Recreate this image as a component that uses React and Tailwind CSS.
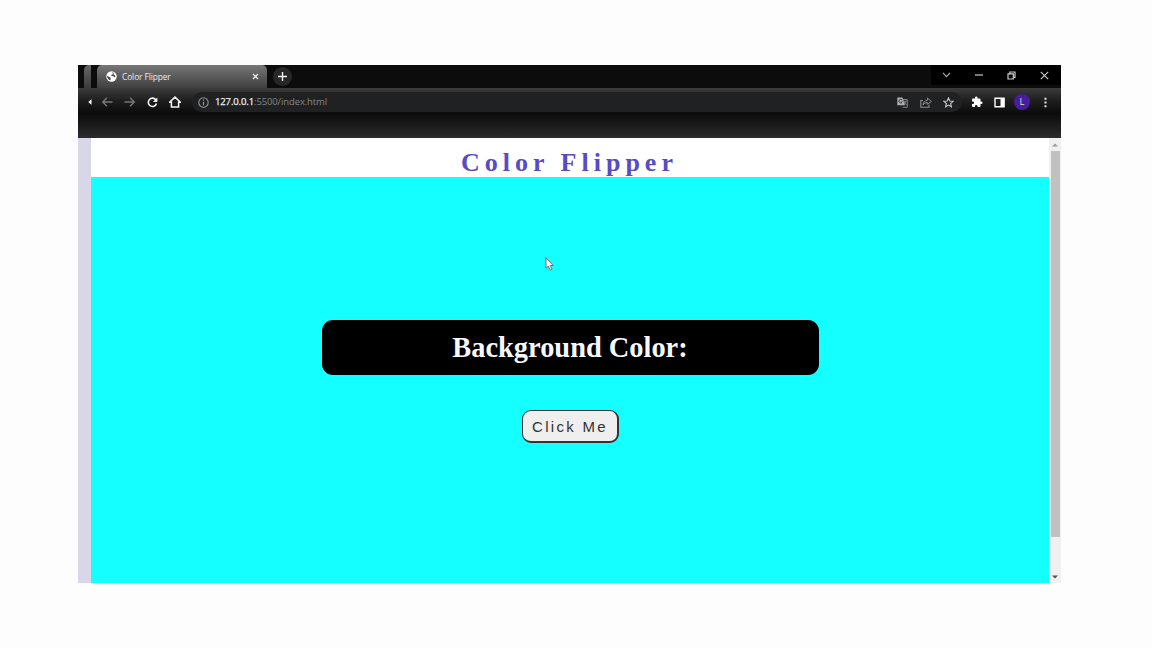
import React from "react";

const Cell = ({ className = "", children }) => (
  <span className={`flex h-full shrink-0 items-center justify-center ${className}`}>{children}</span>
);

function TabStrip() {
  return (
    <div className="flex h-[23px] shrink-0 bg-[#0c0c0c]">
      <div className="ml-[6px] h-full w-[7px] rounded-tl-[5px] bg-linear-to-b from-[#666] to-[#3c3c3c]" />
      <div className="ml-[6px] flex h-full w-[170px] items-center rounded-t-[5px] bg-linear-to-b from-[#777777] to-[#404040] pl-[8px]">
        <svg width="11" height="11" viewBox="0 0 11 11" className="ml-[1px] shrink-0">
          <circle cx="5.5" cy="5.5" r="5.2" fill="#fff" />
          <path d="M5.5 1.3 8.2 2 7 3.3 5.6 3.6 5.3 5 7.3 5 8.1 6.2 9.5 6 8.8 4.2M1 4.5 3.3 6.1 4.8 6.8 4.4 9.3 3 8.9 1.3 6.5Z" fill="#4a4a4a" />
        </svg>
        <span className="mt-[1px] ml-[5px] flex-1 font-['Open_Sans',sans-serif] text-[8.4px] leading-none tracking-[-0.1px] whitespace-nowrap text-[#eeeeee]">Color Flipper</span>
        <svg width="7" height="7" viewBox="0 0 7 7" className="mr-[8px] shrink-0">
          <path d="M1 1 6 6M6 1 1 6" stroke="#eee" strokeWidth="1.3" />
        </svg>
      </div>
      <div className="mt-[2px] ml-[6px] flex h-[19px] w-[19px] items-center justify-center rounded-full bg-[#272727]">
        <svg width="9" height="9" viewBox="0 0 9 9">
          <path d="M4.5 0V9M0 4.5H9" stroke="#f4f4f4" strokeWidth="1.4" />
        </svg>
      </div>
      <div className="ml-auto flex h-[20px] w-[130px] bg-black pl-[1px]">
        <Cell className="w-[29px]">
          <svg width="9" height="6" viewBox="0 0 9 6"><path d="M1 .8 4.5 4.7 8 .8" fill="none" stroke="#aaa" strokeWidth="1.2" /></svg>
        </Cell>
        <Cell className="w-[35px]">
          <svg width="8" height="2" viewBox="0 0 8 2"><path d="M0 1H8" stroke="#bbb" strokeWidth="1.3" /></svg>
        </Cell>
        <Cell className="w-[31px]">
          <svg width="9" height="9" viewBox="0 0 9 9"><path d="M1 2.8H6.3V8H1ZM2.8 2.6V1H8V6.5H6.4" fill="none" stroke="#ccc" strokeWidth="1.2" /></svg>
        </Cell>
        <Cell className="w-[34px]">
          <svg width="9" height="9" viewBox="0 0 9 9"><path d="M.8.8 8.2 8.2M8.2.8.8 8.2" stroke="#ccc" strokeWidth="1.1" /></svg>
        </Cell>
      </div>
    </div>
  );
}

function Toolbar() {
  return (
    <div className="flex h-[26px] shrink-0 items-center bg-linear-to-b from-[#3c3c3c] via-[#1e1e1e] to-[#0a0a0a] pt-[2px] pl-[6px]">
      <Cell className="w-[12px]">
        <svg width="4" height="6" viewBox="0 0 4 6"><path d="M3.5 .2V5.8L.3 3Z" fill="#fff" /></svg>
      </Cell>
      <Cell className="w-[22px]">
        <svg width="11" height="10" viewBox="0 0 11 10"><path d="M10.5 5H1M5 .8.8 5 5 9.2" fill="none" stroke="#777" strokeWidth="1.4" /></svg>
      </Cell>
      <Cell className="w-[23px]">
        <svg width="11" height="10" viewBox="0 0 11 10"><path d="M.5 5H10M6 .8 10.2 5 6 9.2" fill="none" stroke="#777" strokeWidth="1.4" /></svg>
      </Cell>
      <Cell className="w-[22px]">
        <svg width="11" height="11" viewBox="0 0 11 11"><path d="M9 3A4.2 4.2 0 1 0 9.5 6.6" fill="none" stroke="#f4f4f4" strokeWidth="1.6" /><path d="M10.4 .4V4.9H5.9Z" fill="#f4f4f4" /></svg>
      </Cell>
      <Cell className="w-[24px]">
        <svg width="12" height="12" viewBox="0 0 12 12"><path d="M.5 6.2 6 1.1 11.5 6.2H9.6V11H2.4V6.2Z" fill="none" stroke="#f4f4f4" strokeWidth="1.5" /></svg>
      </Cell>
      <div className="ml-[5px] flex h-[20px] w-[770px] shrink-0 items-center rounded-full bg-[#202123] pr-[2px]">
        <Cell className="w-[23px]">
          <svg width="11" height="11" viewBox="0 0 11 11"><circle cx="5.5" cy="5.5" r="4.7" fill="none" stroke="#929292" strokeWidth="1.1" /><path d="M5.5 4.8V8.2M5.5 2.6V3.8" stroke="#929292" strokeWidth="1.2" /></svg>
        </Cell>
        <span className="flex-1 font-['Open_Sans',sans-serif] text-[9.5px] leading-none tracking-[-0.12px] whitespace-nowrap text-[#858585]">
          <span className="text-[#eeeeee] [-webkit-text-stroke:0.25px_#eeeeee]">127.0.0.1</span>:5500/index.html
        </span>
        <Cell className="w-[23px]">
          <svg width="11" height="11" viewBox="0 0 11 11"><path d="M5.5 2.5H10.3V10.3H5.5" fill="none" stroke="#858585" /><path d="M.3.5H5.5L8 8.2H.3Z" fill="#b0b0b0" /><path d="M5.2 3.2A1.8 1.8 0 1 0 5.3 5H3.8" fill="none" stroke="#333" strokeWidth=".9" /><path d="M6.8 4.3H9.8M8.6 4.3 7.5 6.5M7.3 5.2 9.5 8" stroke="#999" strokeWidth=".8" /></svg>
        </Cell>
        <Cell className="w-[23px]">
          <svg width="12" height="11" viewBox="0 0 12 11"><path d="M3 3.5H.8V10.3H9V7.8" fill="none" stroke="#8f8f8f" strokeWidth="1.1" /><path d="M3 8C3.3 5 5 3.5 7.4 3.3V1L11.3 4.5 7.4 7.4V5.5C5.4 5.6 4 6.5 3 8Z" fill="none" stroke="#8f8f8f" strokeWidth="1" /></svg>
        </Cell>
        <Cell className="w-[23px]">
          <svg width="11" height="11" viewBox="0 0 11 11"><path d="M5.5 .9 6.8 4 10.2 4.3 7.6 6.5 8.4 9.8 5.5 8.1 2.6 9.8 3.4 6.5 .8 4.3 4.2 4Z" fill="none" stroke="#c8c8c8" strokeWidth="1.1" /></svg>
        </Cell>
      </div>
      <Cell className="ml-[3px] w-[23px]">
        <svg width="12" height="12" viewBox="0 0 24 24"><path d="M20.5 11H19V7a2 2 0 0 0-2-2h-4V3.500a2.500 2.500 0 0 0-5 0V5H4a2 2 0 0 0-2 2v3.800h1.500a2.700 2.700 0 0 1 0 5.400H2V20a2 2 0 0 0 2 2h3.800v-1.500a2.700 2.700 0 0 1 5.400 0V22H17a2 2 0 0 0 2-2v-4h1.500a2.500 2.500 0 0 0 0-5Z" fill="#fff" /></svg>
      </Cell>
      <Cell className="w-[23px]">
        <svg width="11" height="11" viewBox="0 0 11 11"><path d="M1 1.200H10V9.800H1Z" fill="none" stroke="#fff" strokeWidth="1.400" /><path d="M6.500 1H10.500V10H6.500Z" fill="#fff" /></svg>
      </Cell>
      <Cell className="w-[22px]">
        <span className="flex h-[16px] w-[16px] items-center justify-center rounded-full bg-[#481d9b] font-['Open_Sans',sans-serif] text-[9.5px] leading-none text-[#ddd]">L</span>
      </Cell>
      <Cell className="w-[24px]">
        <svg width="3" height="11" viewBox="0 0 3 11"><path d="M.5 .8H2.500V2.800H.5ZM.5 4.500H2.500V6.500H.5ZM.5 8.200H2.500V10.200H.5Z" fill="#e6e6e6" /></svg>
      </Cell>
    </div>
  );
}

function Scrollbar() {
  return (
    <div className="flex w-[12px] shrink-0 flex-col items-center bg-[#f0f0f0]">
      <div className="flex h-[13px] items-center">
        <svg width="6" height="4" viewBox="0 0 6 4"><path d="M0 3.500 3 .5 6 3.500Z" fill="#999" /></svg>
      </div>
      <div className="h-[386px] w-[9px] bg-[#c1c1c1]" />
      <div className="mt-auto flex h-[13px] items-center">
        <svg width="6" height="4" viewBox="0 0 6 4"><path d="M0 .5 3 3.500 6 .5Z" fill="#505050" /></svg>
      </div>
    </div>
  );
}

function Page() {
  return (
    <div className="flex min-w-0 flex-1 flex-col">
      <header className="flex h-[39px] shrink-0 items-center justify-center bg-white pt-[10px]">
        <h1 className="pr-[1px] font-['Liberation_Serif',serif] text-[26px] leading-none font-bold tracking-[5px] whitespace-nowrap text-[#584bc4]">Color Flipper</h1>
      </header>
      <main className="relative flex flex-1 flex-col items-center bg-[#14ffff] pt-[143px]">
        <div className="flex h-[55px] w-[497px] items-center justify-center rounded-[11px] bg-black pt-[1px] font-['Liberation_Serif',serif] text-[28.400px] leading-none font-bold whitespace-nowrap text-[#f8f8ff]">
          Background Color:
        </div>
        <button className="mt-[35px] flex h-[33px] w-[97px] items-center justify-center rounded-[9px] border-t border-r-2 border-b-2 border-l border-[#333333] bg-[#efefef] pl-[1px] font-['Liberation_Sans',sans-serif] text-[15px] leading-none tracking-[2.300px] whitespace-nowrap text-[#333]">Click Me</button>
        <svg className="absolute top-[80px] left-[454px]" width="10" height="15" viewBox="0 0 10 15">
          <path d="M1 .8V11.200L3.300 9.100 5.200 13.200 7.100 12.300 5.300 8.500H8.200Z" fill="#fff" stroke="#555" strokeWidth=".8" />
        </svg>
      </main>
    </div>
  );
}

export default function App() {
  return (
    <div className="h-[648px] w-[1152px] overflow-hidden bg-[#fdfdfd] pt-[65px] pl-[78px]">
      <div className="flex h-[518px] w-[983px] flex-col">
        <TabStrip />
        <Toolbar />
        <div className="h-[24px] shrink-0 bg-linear-to-b from-[#0c0c0c] to-[#2d2d2d]" />
        <div className="flex min-h-0 flex-1">
          <div className="w-[13px] shrink-0 bg-[#d7d7e8]" />
          <Page />
          <Scrollbar />
        </div>
      </div>
    </div>
  );
}
